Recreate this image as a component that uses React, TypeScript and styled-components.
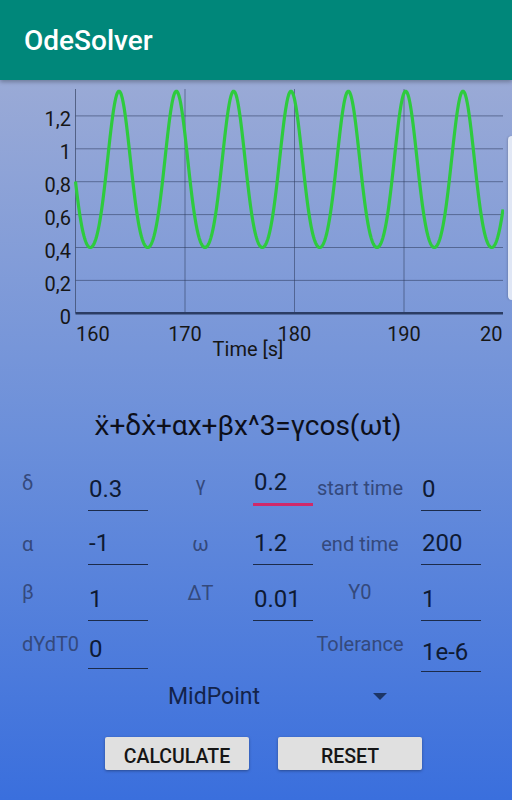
import React from "react";
import styled, { createGlobalStyle } from "styled-components";

const GlobalStyle = createGlobalStyle`
  html, body { margin: 0; padding: 0; }
  body { font-family: Roboto, "Noto Sans", "DejaVu Sans", sans-serif; }
`;

const Screen = styled.div`
  position: relative;
  width: 512px;
  height: 800px;
  display: flex;
  flex-direction: column;
  overflow: hidden;
`;

const AppBar = styled.header`
  position: relative;
  z-index: 1;
  flex: none;
  height: 80px;
  display: flex;
  align-items: center;
  padding-left: 24px;
  background: #00877a;
  color: #ffffff;
  font-size: 28px;
  font-weight: 500;
  box-shadow: 0 2px 4px rgba(0, 0, 0, 0.28);
`;

const Content = styled.main`
  flex: 1;
  display: flex;
  flex-direction: column;
  background: linear-gradient(180deg, #9aaad6 0%, #6b8fda 50%, #3a6fdd 100%);
`;

const ChartSvg = styled.svg`
  display: block;
  flex: none;
  font-family: Roboto, "Noto Sans", sans-serif;
  font-size: 20px;
  fill: #161616;
`;

const EdgeHandle = styled.div`
  position: absolute;
  right: 0;
  top: 136px;
  width: 4px;
  height: 164px;
  border-radius: 5px 0 0 5px;
  background: rgba(240, 243, 250, 0.85);
  box-shadow: -1px 0 2px rgba(0, 0, 0, 0.15);
`;

const Equation = styled.div`
  margin-top: 40px;
  padding-right: 16px;
  height: 32px;
  text-align: center;
  font-size: 28px;
  line-height: 32px;
  color: #0d0f1a;
`;

const Form = styled.div`
  margin-top: 24px;
  padding-left: 22px;
  display: flex;
  flex-direction: column;
`;

const Row = styled.div<{ $gap: number }>`
  display: grid;
  grid-template-columns: 66px 60px 105px 60px 108px 60px;
  align-items: start;
  margin-top: ${(p) => p.$gap}px;
`;

const Label = styled.div<{ $top: number; $col: 1 | 2 | 3 }>`
  margin-top: ${(p) => p.$top}px;
  font-size: 20px;
  line-height: 24px;
  color: #34497c;
  white-space: nowrap;
  text-align: ${(p) => (p.$col === 1 ? "left" : "center")};
  padding-right: ${(p) => (p.$col === 3 ? 14 : 0)}px;
`;

const Field = styled.div<{ $pt: number; $pb: number; $focused?: boolean; $shift?: number }>`
  margin-top: ${(p) => p.$shift ?? 0}px;
  padding: ${(p) => p.$pt}px 0 ${(p) => p.$pb}px 1px;
  font-size: 24px;
  line-height: 28px;
  color: #0e1a33;
  border-bottom: ${(p) => (p.$focused ? "3px solid #cf2a6a" : "1px solid #1c2b4a")};
`;

const Spinner = styled.div`
  margin-top: 11px;
  margin-left: 160px;
  width: 236px;
  box-sizing: border-box;
  padding: 0 9px 0 8px;
  display: flex;
  align-items: center;
  justify-content: space-between;
  font-size: 23px;
  line-height: 27px;
  color: #13234a;
`;

const Arrow = styled.span`
  width: 0;
  height: 0;
  border-left: 7px solid transparent;
  border-right: 7px solid transparent;
  border-top: 7px solid #1c3566;
`;

const ButtonRow = styled.div`
  margin-top: 27px;
  padding-left: 105px;
  display: flex;
  gap: 29px;
`;

const Button = styled.button`
  width: 144px;
  height: 33px;
  border: none;
  border-radius: 2px;
  padding: 5px 0 0;
  background: #e0e0e0;
  box-shadow: 0 1px 3px rgba(0, 0, 0, 0.35);
  font-family: Roboto, "Noto Sans", sans-serif;
  font-weight: 500;
  font-size: 19.5px;
  color: #151515;
`;

// chart geometry (svg coords, svg top = page y 80)
const X0 = 75.5;
const XR = 503;
const Y0 = 233.3;
const YTOP = 9;
const PX_PER_S = 10.95;
const PX_PER_UNIT = 164.5;
const tx = (t: number) => X0 + (t - 160) * PX_PER_S;
const vy = (v: number) => Y0 - v * PX_PER_UNIT;

function curvePath(): string {
  const tp = 160 + 43.5 / PX_PER_S;
  const pts: string[] = [];
  for (let x = X0; x <= XR + 0.01; x += 0.5) {
    const t = 160 + (x - X0) / PX_PER_S;
    const th = 1.2 * (t - tp);
    const v = 0.825 + 0.475 * Math.cos(th) + 0.05 * Math.cos(2 * th);
    pts.push(`${x.toFixed(1)},${vy(v).toFixed(2)}`);
  }
  return "M" + pts.join("L");
}

const yTicks = [
  { v: 1.2, l: "1,2" },
  { v: 1, l: "1" },
  { v: 0.8, l: "0,8" },
  { v: 0.6, l: "0,6" },
  { v: 0.4, l: "0,4" },
  { v: 0.2, l: "0,2" },
  { v: 0, l: "0" },
];

function Chart() {
  const grid = "rgba(45, 58, 92, 0.55)";
  return (
    <ChartSvg width={504} height={290} viewBox="0 0 504 290">
      {yTicks.slice(0, 6).map((t) => (
        <line key={t.l} x1={X0} x2={XR} y1={vy(t.v)} y2={vy(t.v)} stroke={grid} strokeWidth={1} />
      ))}
      {[170, 180, 190].map((s) => (
        <line key={s} x1={tx(s)} x2={tx(s)} y1={YTOP} y2={Y0} stroke={grid} strokeWidth={1} />
      ))}
      <line x1={X0} x2={X0} y1={YTOP} y2={Y0} stroke="rgba(55, 68, 100, 0.7)" strokeWidth={1} />
      <path d={curvePath()} fill="none" stroke="#2ecb3e" strokeWidth={3.2} strokeLinejoin="round" />
      <line x1={X0} x2={XR} y1={Y0} y2={Y0} stroke="#2b3c63" strokeWidth={2.6} />
      {yTicks.map((t) => (
        <text key={t.l} x={71} y={vy(t.v) + 10.5} textAnchor="end">
          {t.l}
        </text>
      ))}
      <text x={76} y={260.7}>160</text>
      <text x={tx(170)} y={260.7} textAnchor="middle">170</text>
      <text x={tx(180)} y={260.7} textAnchor="middle">180</text>
      <text x={tx(190)} y={260.7} textAnchor="middle">190</text>
      <text x={480} y={260.7}>20</text>
      <text x={248} y={275.5} textAnchor="middle">Time [s]</text>
    </ChartSvg>
  );
}

export default function App() {
  return (
    <Screen>
      <GlobalStyle />
      <AppBar>OdeSolver</AppBar>
      <Content>
        <Chart />
        <Equation>{"\u1E8D+\u03B4\u1E8B+\u03B1x+\u03B2x^3=\u03B3cos(\u03C9t)"}</Equation>
        <Form>
          <Row $gap={0}>
            <Label $col={1} $top={5}>δ</Label>
            <Field $pt={9} $pb={7}>0.3</Field>
            <Label $col={2} $top={6}>γ</Label>
            <Field $pt={2} $pb={7} $focused>0.2</Field>
            <Label $col={3} $top={10}>start time</Label>
            <Field $pt={9} $pb={7}>0</Field>
          </Row>
          <Row $gap={9}>
            <Label $col={1} $top={12}>α</Label>
            <Field $pt={9} $pb={7}>-1</Field>
            <Label $col={2} $top={12}>ω</Label>
            <Field $pt={9} $pb={7}>1.2</Field>
            <Label $col={3} $top={12}>end time</Label>
            <Field $pt={9} $pb={7}>200</Field>
          </Row>
          <Row $gap={11}>
            <Label $col={1} $top={4}>β</Label>
            <Field $pt={9} $pb={7}>1</Field>
            <Label $col={2} $top={5}>ΔT</Label>
            <Field $pt={9} $pb={7}>0.01</Field>
            <Label $col={3} $top={4}>Y0</Label>
            <Field $pt={9} $pb={7}>1</Field>
          </Row>
          <Row $gap={3}>
            <Label $col={1} $top={8}>dYdT0</Label>
            <Field $pt={11} $pb={5}>0</Field>
            <span />
            <span />
            <Label $col={3} $top={8}>Tolerance</Label>
            <Field $pt={11} $pb={5} $shift={3}>1e-6</Field>
          </Row>
        </Form>
        <Spinner>
          <span>MidPoint</span>
          <Arrow />
        </Spinner>
        <ButtonRow>
          <Button>CALCULATE</Button>
          <Button>RESET</Button>
        </ButtonRow>
      </Content>
      <EdgeHandle />
    </Screen>
  );
}
